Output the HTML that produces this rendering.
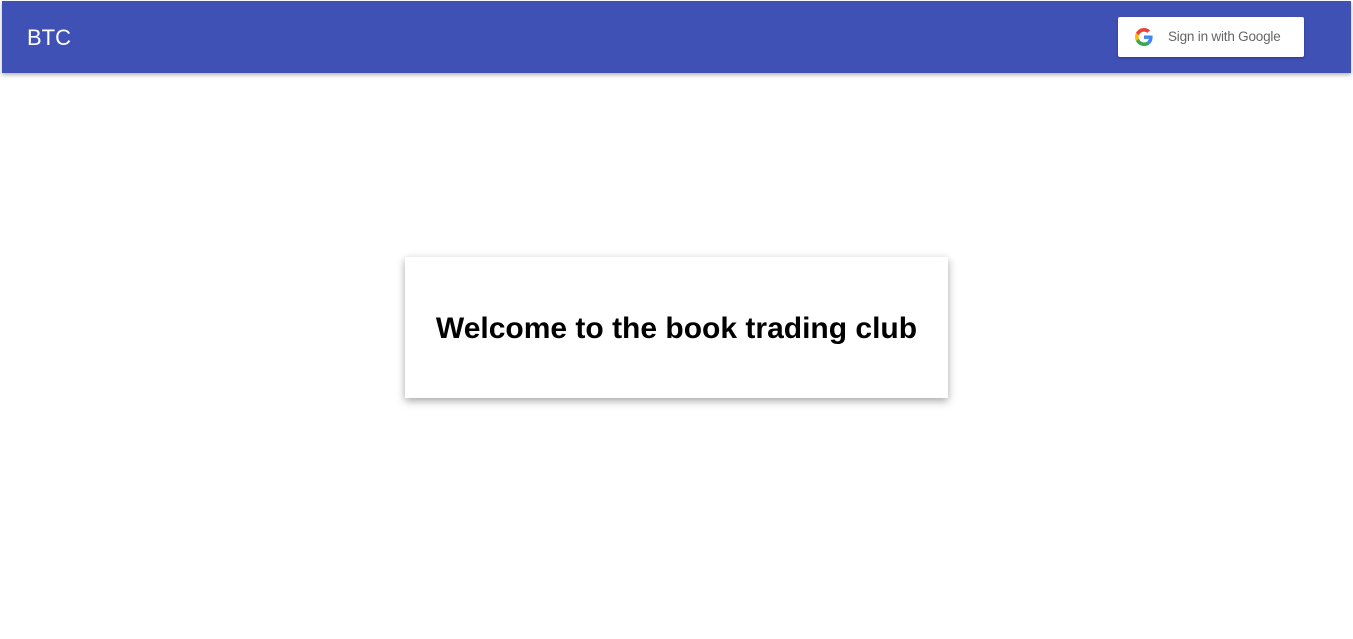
<!DOCTYPE html>
<html><head><style>
body{margin:0;width:1353px;height:639px;background:#fff;font-family:"Liberation Sans",sans-serif;position:relative;overflow:hidden}
.hdr{position:absolute;left:2px;top:1px;width:1349px;height:72px;background:#3f51b5;box-shadow:0 2px 4px rgba(0,0,0,.3)}
.logo{position:absolute;left:25px;top:24px;color:#fff;font-size:22px}
.btn{position:absolute;left:1116px;top:16px;width:186px;height:40px;background:#fff;border-radius:2px;box-shadow:0 1px 2px rgba(0,0,0,.3)}
.btn svg{position:absolute;left:17px;top:11px}
.btn span{position:absolute;left:50px;top:12px;font-size:13.5px;color:#666;letter-spacing:-0.2px}
.card{position:absolute;left:405px;top:257px;width:543px;height:141px;background:#fff;box-shadow:0 3px 8px rgba(0,0,0,.35)}
.card h1{margin:0;position:absolute;left:0;right:0;top:55px;text-align:center;font-size:30px;font-weight:bold;color:#000}
</style></head><body>
<div class="hdr"><div class="logo">BTC</div>
<div class="btn"><svg width="18" height="18" viewBox="0 0 48 48"><path fill="#EA4335" d="M24 9.5c3.54 0 6.71 1.22 9.21 3.6l6.85-6.850C35.9 2.380 30.470 0 24 0 14.62 0 6.51 5.38 2.56 13.22l7.98 6.19C12.43 13.72 17.74 9.5 24 9.5z"/><path fill="#4285F4" d="M46.98 24.55c0-1.57-.15-3.09-.38-4.55H24v9.02h12.94c-.58 2.96-2.26 5.48-4.78 7.18l7.73 6c4.51-4.18 7.09-10.36 7.09-17.65z"/><path fill="#FBBC05" d="M10.53 28.59c-.48-1.450-.76-2.990-.76-4.59s.27-3.14.76-4.59l-7.98-6.19C.92 16.46 0 20.12 0 24c0 3.88.92 7.54 2.56 10.78l7.97-6.19z"/><path fill="#34A853" d="M24 48c6.48 0 11.93-2.13 15.89-5.81l-7.73-6c-2.15 1.45-4.92 2.3-8.16 2.3-6.26 0-11.57-4.22-13.47-9.91l-7.98 6.19C6.51 42.62 14.62 48 24 48z"/></svg><span>Sign in with Google</span></div>
</div>
<div class="card"><h1>Welcome to the book trading club</h1></div>
</body></html>
